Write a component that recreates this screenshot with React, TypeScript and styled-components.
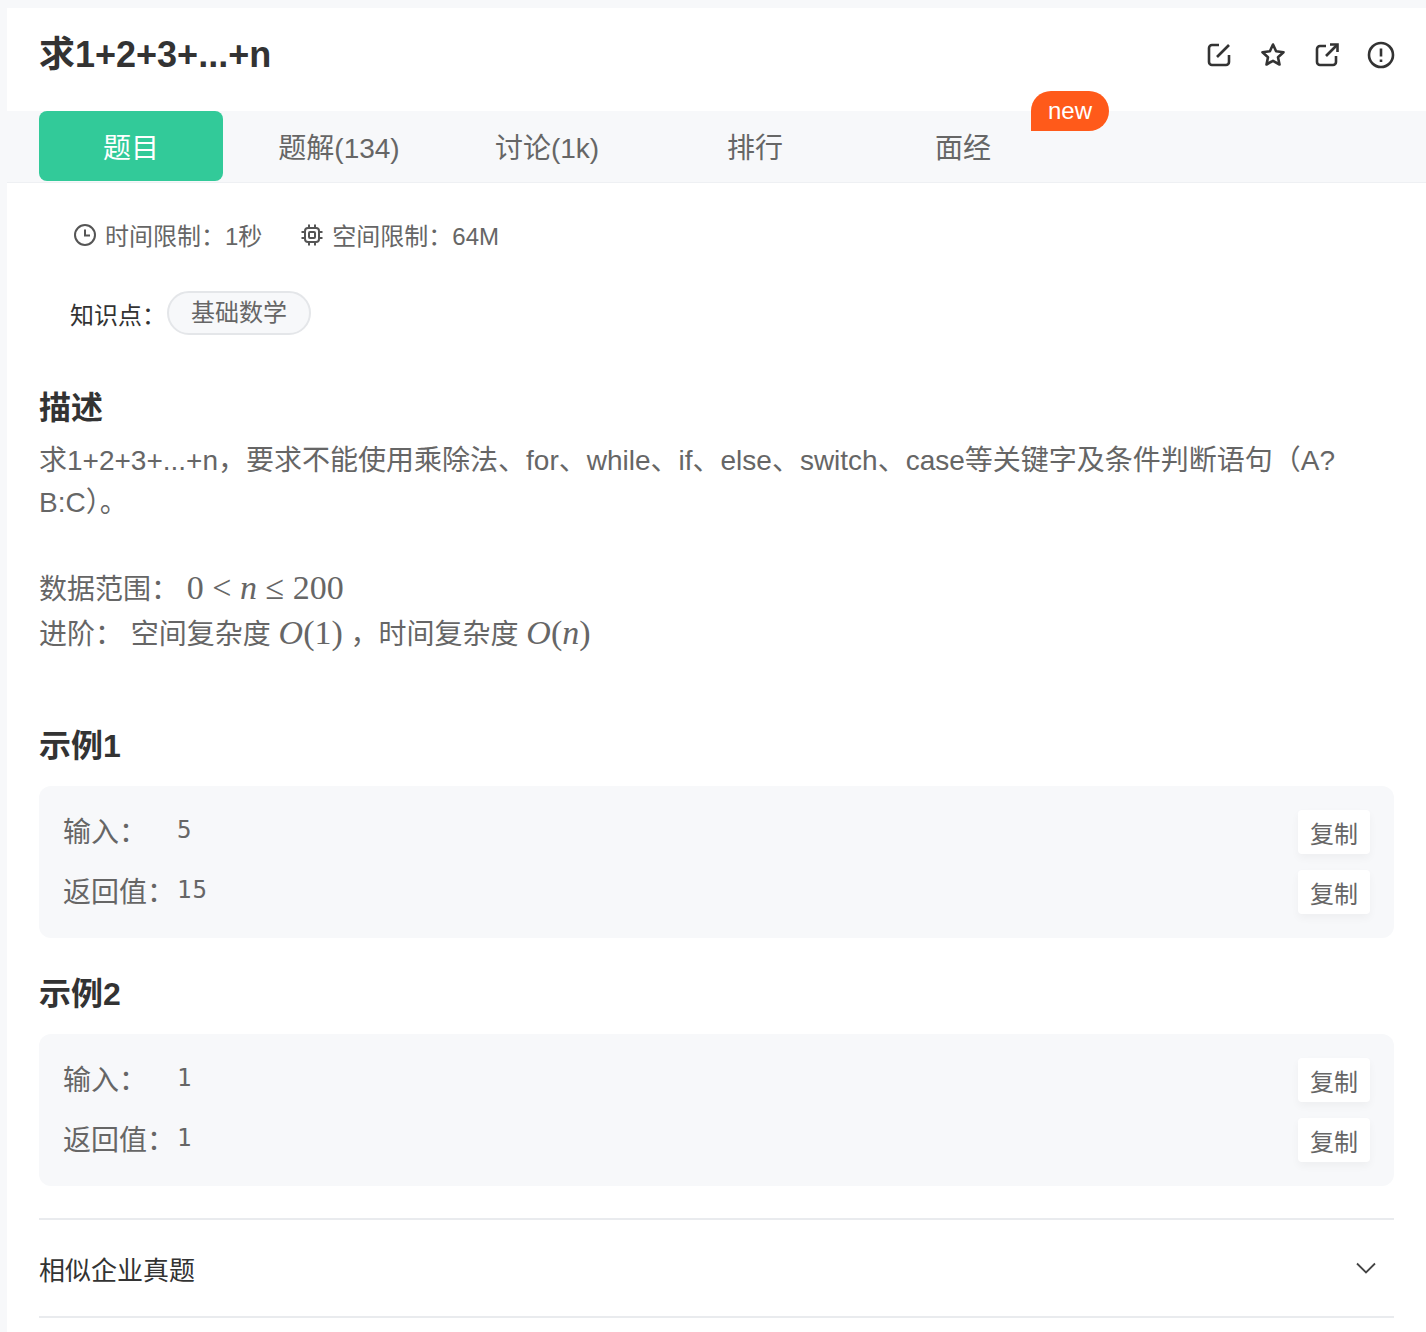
import React from "react";
import styled, { createGlobalStyle } from "styled-components";

const SANS = `"Liberation Sans", "Noto Sans CJK SC", sans-serif`;
const MATH = `"Liberation Serif", "Noto Sans CJK SC", serif`;

const GlobalStyle = createGlobalStyle`
  html, body { margin: 0; padding: 0; background: #f7f8fa; }
  body { font-family: ${SANS}; color: #666; overflow: hidden; }
  * { box-sizing: border-box; }
`;

function App() {
  return (
    <>
      <GlobalStyle />
      <Page>
        <Card>
          <TitleRow>
            <Title>求1+2+3+...+n</Title>
            <Actions>
              <ActionIcon viewBox="0 0 28 28">
                <path d="M14 4H7a3 3 0 0 0-3 3v14a3 3 0 0 0 3 3h14a3 3 0 0 0 3-3v-7" />
                <path d="M12 16L24 4" />
              </ActionIcon>
              <ActionIcon viewBox="0 0 28 28">
                <path d="M14 3.5l3.1 6.8 7.4.9-5.5 5 1.5 7.3-6.5-3.7-6.5 3.7 1.5-7.3-5.5-5 7.4-.9z" strokeLinejoin="round" />
              </ActionIcon>
              <ActionIcon viewBox="0 0 28 28">
                <path d="M13 5H7a3 3 0 0 0-3 3v13a3 3 0 0 0 3 3h13a3 3 0 0 0 3-3v-6" />
                <path d="M13 15L24 4" />
                <path d="M17 3.5h7.500V11" />
              </ActionIcon>
              <ActionIcon viewBox="0 0 28 28">
                <circle cx="14" cy="14" r="12" />
                <path d="M14 7.500v8" />
                <path d="M14 18.500v2.500" />
              </ActionIcon>
            </Actions>
          </TitleRow>

          <TabBar>
            <Tab $active>题目</Tab>
            <Tab>题解(134)</Tab>
            <Tab>讨论(1k)</Tab>
            <Tab>排行</Tab>
            <Tab>面经</Tab>
            <NewBadge>new</NewBadge>
          </TabBar>

          <Limits>
            <LimitItem>
              <LimitIcon viewBox="0 0 24 24">
                <circle cx="12" cy="12" r="10" />
                <path d="M12 6.500V12.500H17" />
              </LimitIcon>
              时间限制：1秒
            </LimitItem>
            <LimitItem>
              <LimitIcon viewBox="0 0 24 24">
                <rect x="5" y="5" width="14" height="14" rx="3" />
                <rect x="9" y="9" width="6" height="6" rx="1" />
                <path d="M9 1.500V5M15 1.500V5M9 19v3.500M15 19v3.500M1.500 9H5M1.500 15H5M19 9h3.500M19 15h3.500" />
              </LimitIcon>
              空间限制：64M
            </LimitItem>
          </Limits>

          <TagRow>
            <TagLabel>知识点：</TagLabel>
            <Tag>基础数学</Tag>
          </TagRow>

          <Body>
            <SectionTitle>描述</SectionTitle>
            <Description>
              求1+2+3+...+n，要求不能使用乘除法、for、while、if、else、switch、case等关键字及条件判断语句（A?B:C）。
            </Description>
            <MathBlock>
              <div>
                数据范围： <Formula>0 &lt; <i>n</i> ≤ 200</Formula>
              </div>
              <div>
                进阶： 空间复杂度 <Formula><i>O</i>(1)</Formula> ，时间复杂度 <Formula><i>O</i>(<i>n</i>)</Formula>
              </div>
            </MathBlock>

            <ExampleTitle>示例1</ExampleTitle>
            <ExampleBox>
              <ExampleRow>
                <IoLabel>输入：</IoLabel>
                <IoValue>5</IoValue>
                <CopyButton>复制</CopyButton>
              </ExampleRow>
              <ExampleRow>
                <IoLabel>返回值：</IoLabel>
                <IoValue>15</IoValue>
                <CopyButton>复制</CopyButton>
              </ExampleRow>
            </ExampleBox>

            <ExampleTitle $second>示例2</ExampleTitle>
            <ExampleBox>
              <ExampleRow>
                <IoLabel>输入：</IoLabel>
                <IoValue>1</IoValue>
                <CopyButton>复制</CopyButton>
              </ExampleRow>
              <ExampleRow>
                <IoLabel>返回值：</IoLabel>
                <IoValue>1</IoValue>
                <CopyButton>复制</CopyButton>
              </ExampleRow>
            </ExampleBox>

            <Accordion>
              <AccordionText>相似企业真题</AccordionText>
              <Chevron viewBox="0 0 20 12">
                <path d="M1 1.500L10 10.500L19 1.500" />
              </Chevron>
            </Accordion>
          </Body>
        </Card>
      </Page>
    </>
  );
}

export default App;

const Page = styled.div`
  padding: 8px 0 0 7px;
  height: 1332px;
  overflow: hidden;
`;
const Card = styled.div`
  background: #fff;
  height: 1324px;
`;
const TitleRow = styled.div`
  height: 103px;
  padding: 0 32px;
  display: flex;
  align-items: center;
  justify-content: space-between;
  padding-top: 15px;
  padding-bottom: 25px;
`;
const Title = styled.h1`
  margin: 0;
  font-size: 36px;
  line-height: 48px;
  font-weight: 700;
  color: #333;
`;
const Actions = styled.div`
  display: flex;
  gap: 26px;
  margin-right: -1px;
`;
const ActionIcon = styled.svg`
  width: 28px;
  height: 28px;
  fill: none;
  stroke: #333;
  stroke-width: 2.6;
`;
const TabBar = styled.div`
  position: relative;
  height: 72px;
  padding-left: 32px;
  background: #f7f8fa;
  border-bottom: 1px solid #eef0f3;
  display: flex;
  gap: 24px;
`;
const Tab = styled.div<{ $active?: boolean }>`
  width: 184px;
  height: 70px;
  border-radius: 8px;
  display: flex;
  align-items: center;
  justify-content: center;
  font-size: 28px;
  background: ${(p) => (p.$active ? "#32ca99" : "transparent")};
  color: ${(p) => (p.$active ? "#fff" : "#666")};
`;
const NewBadge = styled.span`
  position: absolute;
  left: 1024px;
  top: -20px;
  width: 78px;
  height: 40px;
  border-radius: 20px 20px 20px 0;
  background: #ff5a1a;
  color: #fff;
  font-size: 24px;
  display: flex;
  align-items: center;
  justify-content: center;
`;
const Limits = styled.div`
  display: flex;
  gap: 38px;
  padding: 36px 0 0 66px;
  height: 84px;
  font-size: 24px;
  line-height: 36px;
  color: #666;
`;
const LimitItem = styled.div`
  display: flex;
  align-items: center;
  gap: 8px;
  height: 36px;
`;
const LimitIcon = styled.svg`
  width: 24px;
  height: 24px;
  fill: none;
  stroke: #555;
  stroke-width: 2;
  margin-top: -4px;
`;
const TagRow = styled.div`
  display: flex;
  align-items: flex-start;
  padding: 24px 0 0 63px;
  height: 76px;
`;
const TagLabel = styled.span`
  font-size: 24px;
  line-height: 44px;
  margin-top: 3px;
  width: 97px;
  color: #333;
`;
const Tag = styled.span`
  width: 144px;
  height: 44px;
  border: 2px solid #e4e6e9;
  border-radius: 22px;
  background: #f7f8fa;
  font-size: 24px;
  line-height: 40px;
  text-align: center;
  color: #666;
`;
const Body = styled.div`
  padding: 0 32px;
`;
const SectionTitle = styled.h2`
  margin: 0;
  padding-top: 33px;
  font-size: 32px;
  line-height: 64px;
  height: 97px;
  font-weight: 700;
  color: #333;
`;
const Description = styled.p`
  margin: 0;
  font-size: 28px;
  line-height: 42px;
  color: #666;
`;
const MathBlock = styled.div`
  margin-top: 42px;
  font-size: 28px;
  line-height: 43px;
  color: #666;
`;
const Formula = styled.span`
  font-family: ${MATH};
  font-size: 34px;
  color: #666;
`;
const ExampleTitle = styled.h3<{ $second?: boolean }>`
  margin: 0;
  padding-top: ${(p) => (p.$second ? "32px" : "66px")};
  font-size: 32px;
  line-height: 48px;
  height: ${(p) => (p.$second ? "96px" : "130px")};
  font-weight: 700;
  color: #333;
`;
const ExampleBox = styled.div`
  height: 152px;
  border-radius: 12px;
  background: #f7f8fa;
  padding: 14px 24px 0;
`;
const ExampleRow = styled.div`
  display: flex;
  align-items: center;
  height: 60px;
`;
const IoLabel = styled.span`
  width: 114px;
  font-size: 28px;
  color: #666;
`;
const IoValue = styled.span`
  flex: 1;
  font-family: "DejaVu Sans Mono", monospace;
  font-size: 24px;
  letter-spacing: 1px;
  color: #666;
`;
const CopyButton = styled.button`
  width: 72px;
  height: 44px;
  margin-top: 4px;
  border: 0;
  border-radius: 4px;
  background: #fff;
  box-shadow: 0 4px 8px rgba(0, 0, 0, 0.04);
  font-family: ${SANS};
  font-size: 24px;
  color: #666;
  padding: 0;
`;
const Accordion = styled.div`
  margin-top: 32px;
  height: 100px;
  border-top: 2px solid #e9ebee;
  border-bottom: 2px solid #e9ebee;
  display: flex;
  align-items: center;
  justify-content: space-between;
  padding-right: 18px;
`;
const AccordionText = styled.span`
  font-size: 26px;
  color: #333;
`;
const Chevron = styled.svg`
  width: 20px;
  height: 12px;
  fill: none;
  stroke: #444;
  stroke-width: 1.8;
`;
